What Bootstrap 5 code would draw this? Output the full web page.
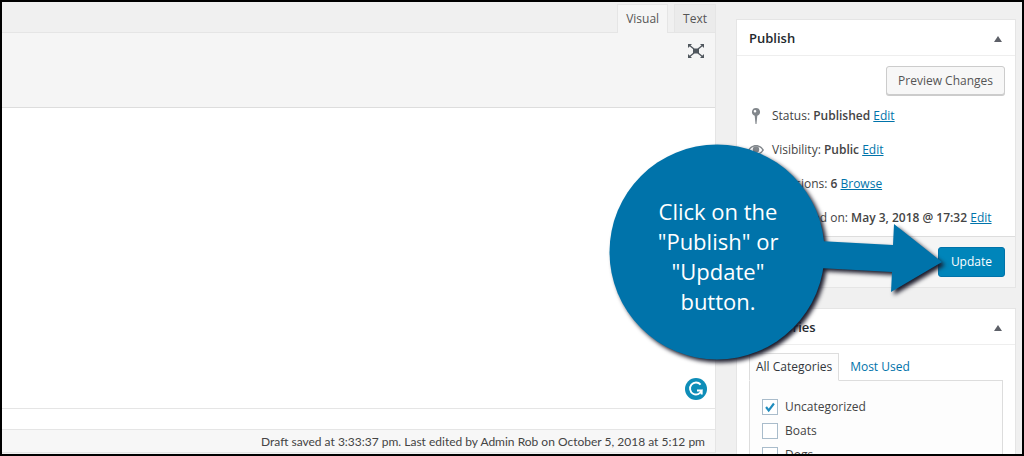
<!DOCTYPE html>
<html lang="en">
<head>
<meta charset="utf-8">
<meta name="viewport" content="width=device-width, initial-scale=1">
<title>Edit Post</title>
<link href="https://cdn.jsdelivr.net/npm/bootstrap@5.3.0/dist/css/bootstrap.min.css" rel="stylesheet">
<style>
  body { font-family: "Open Sans", "Noto Sans", sans-serif; font-size: 12px; line-height: 18px; color: #444; background: #f0f0f0; }
  a { color: #0073aa; }
  b { font-weight: 600; }
  .frame { border: 2px solid #000; padding-right: 6px; gap: 20px; }
  .editor-tabs { height: 30px; gap: 6px; padding-top: 2px; }
  .editor-tabs .nav-link { border: 1px solid #e5e5e5; border-bottom: 0; border-radius: 0; background: #ebebeb; color: #555; padding: 5px 8px; margin: 0; height: 28px; }
  .editor-tabs .nav-link.active { background: #f5f5f5; color: #555; height: 29px; z-index: 1; }
  .editor-box { border: 1px solid #e5e5e5; border-left: 0; background: #fff; margin-bottom: 1px; }
  .editor-bar { height: 75px; background: #f5f5f5; border-bottom: 1px solid #ddd; padding: 11px 10px; }
  .editor-text { resize: none; border-radius: 0; border: 0; font-size: 12px; }
  .editor-path { height: 21px; border-top: 1px solid #e5e5e5; }
  .editor-status { height: 23px; border-top: 1px solid #e5e5e5; background: #f7f7f7; padding: 3px 10px; font-family: Lato, "Open Sans", sans-serif; }
  .helper { right: 8px; bottom: 8px; width: 22px; height: 22px; }
  .side { width: 280px; padding-top: 17px; gap: 20px; }
  .postbox { background: #fff; border: 1px solid #e5e5e5; border-radius: 0; }
  .postbox-head { height: 36px; border-bottom: 1px solid #eee; padding: 2px 12px 0; }
  .postbox-head h2 { font-size: 13px; font-weight: 600; color: #23282d; }
  .wp-btn { font-size: 12px; line-height: 18px; border-radius: 3px; }
  .preview-row { padding: 10px 10px 4px; }
  .btn-preview { background: #f7f7f7; border: 1px solid #ccc; color: #555; box-shadow: 0 1px 0 #ccc; padding: 5px 11px 4px; }
  .btn-update { background: #0085ba; border: 1px solid #0073aa; color: #fff; padding: 5px 12px; }
  .meta-row { height: 34px; gap: 7px; padding: 0 10px; }
  .meta-row svg { width: 18px; height: 18px; flex: none; fill: #82878c; }
  .publish-foot { background: #f5f5f5; border-top: 1px solid #ddd; padding: 10px; margin-top: 1px; }
  .cat-tabs { margin-bottom: -1px; }
  .cat-tabs .nav-link { color: #0073aa; border: 1px solid transparent; border-radius: 0; padding: 3px 6px 4px; line-height: 19px; margin: 0; }
  .cat-tabs .nav-link.active { color: #32373c; background: #fdfdfd; border-color: #ddd #ddd #fdfdfd; }
  .cat-list { border: 1px solid #ddd; background: #fdfdfd; padding: 14px 12px; height: 200px; }
  .cat-list label { height: 24px; gap: 7px; }
  .cat-list input { width: 16px; height: 16px; margin: 0; border: 1px solid #a9bccb; border-radius: 0 !important; }
  .cat-list input:checked { background-color: #fff; border-color: #a9bccb; background-image: url("data:image/svg+xml,%3Csvg xmlns='http://www.w3.org/2000/svg' viewBox='0 0 16 16'%3E%3Cpath d='M3.5 8l3 4 6-8' fill='none' stroke='%231e8cbe' stroke-width='2.4'/%3E%3C/svg%3E"); }
  .callout { right: 79px; top: 130px; width: 350px; height: 240px; pointer-events: none; }
  .callout svg { filter: drop-shadow(3px 3px 2px #1a1a2a); }
  .callout-text { left: 16px; top: 16px; width: 218px; height: 216px; font-size: 22px; line-height: 30px; color: #fff; }
</style>
</head>
<body>
<div class="frame d-flex vh-100 overflow-hidden position-relative">
  <main class="flex-fill d-flex flex-column">
    <nav class="nav editor-tabs justify-content-end" aria-label="Editor mode">
      <button type="button" class="nav-link active">Visual</button>
      <button type="button" class="nav-link">Text</button>
    </nav>
    <div class="editor-box flex-fill d-flex flex-column">
      <div class="editor-bar d-flex justify-content-end align-items-start">
        <button type="button" class="btn p-0 border-0 d-flex" aria-label="Distraction-free writing">
          <svg width="18" height="14" viewBox="0 0 18 14" fill="#50575e"><path d="M6 4.500h6v5H6zM1 0h4L1 4zM13 0h4v4zM1 10l4 4H1zM17 10v4h-4z"/><path d="M2 1l5 4M16 1l-5 4M2 13l5-4M16 13l-5-4" stroke="#50575e" stroke-width="1.400"/></svg>
        </button>
      </div>
      <div class="flex-fill position-relative d-flex">
        <textarea class="form-control editor-text" aria-label="Post content"></textarea>
        <svg class="helper position-absolute" viewBox="0 0 22 22"><circle cx="11" cy="11" r="11" fill="#0e8db8"/><path d="M15.600 6.600A6 6 0 1 0 16.700 12.500H12M16.700 12v4.500" fill="none" stroke="#fff" stroke-width="1.900"/></svg>
      </div>
      <div class="editor-path"></div>
      <div class="editor-status text-end">Draft saved at 3:33:37 pm. Last edited by Admin Rob on October 5, 2018 at 5:12 pm</div>
    </div>
  </main>

  <aside class="side d-flex flex-column flex-shrink-0">
    <section class="postbox flex-shrink-0">
      <div class="postbox-head d-flex align-items-center justify-content-between">
        <h2 class="m-0">Publish</h2>
        <button type="button" class="btn p-0 border-0 d-flex" aria-label="Toggle Publish panel"><svg width="10" height="6" viewBox="0 0 10 6"><path d="M5 0l4 6H1z" fill="#5d6068"/></svg></button>
      </div>
      <div class="preview-row d-flex justify-content-end"><button type="button" class="btn wp-btn btn-preview">Preview Changes</button></div>
      <div class="meta-row d-flex align-items-center">
        <svg viewBox="0 0 18 18"><path d="M9 1a4 4 0 0 0-1.300 7.800L8.500 17h1l.8-8.200A4 4 0 0 0 9 1zM8 3a1.300 1.300 0 1 1 0 2.600A1.300 1.300 0 0 1 8 3z" fill-rule="evenodd"/></svg>
        <span>Status: <b>Published</b> <a href="#">Edit</a></span>
      </div>
      <div class="meta-row d-flex align-items-center">
        <svg viewBox="0 0 18 18"><path d="M9 4C5 4 2.500 6.500 1 9c1.500 2.500 4 5 8 5s6.500-2.500 8-5c-1.500-2.500-4-5-8-5zm0 1.500c3 0 5 1.500 6.200 3.500C14 11 12 12.500 9 12.500S4 11 2.800 9C4 7 6 5.500 9 5.500z" fill-rule="evenodd"/><circle cx="9" cy="8.500" r="3.200"/></svg>
        <span>Visibility: <b>Public</b> <a href="#">Edit</a></span>
      </div>
      <div class="meta-row d-flex align-items-center">
        <svg viewBox="0 0 18 18"><path d="M9 2a7 7 0 1 0 7 7h-2a5 5 0 1 1-5-5zM8 5h2v4h3v2H8z"/></svg>
        <span>Revisions: <b>6</b> <a href="#">Browse</a></span>
      </div>
      <div class="meta-row d-flex align-items-center">
        <svg viewBox="0 0 18 18"><path d="M2 3h14v13H2zm2 4v7h10V7z" fill-rule="evenodd"/></svg>
        <span class="text-nowrap">Published on: <b>May 3, 2018 @ 17:32</b> <a href="#">Edit</a></span>
      </div>
      <div class="publish-foot d-flex justify-content-end"><button type="button" class="btn wp-btn btn-update">Update</button></div>
    </section>

    <section class="postbox flex-shrink-0">
      <div class="postbox-head d-flex align-items-center justify-content-between">
        <h2 class="m-0">Categories</h2>
        <button type="button" class="btn p-0 border-0 d-flex" aria-label="Toggle Categories panel"><svg width="10" height="6" viewBox="0 0 10 6"><path d="M5 0l4 6H1z" fill="#5d6068"/></svg></button>
      </div>
      <div class="px-2 pt-2 ms-1 me-1">
        <nav class="nav cat-tabs gap-1 position-relative">
          <a class="nav-link active" href="#">All Categories</a>
          <a class="nav-link" href="#">Most Used</a>
        </nav>
        <div class="cat-list">
          <label class="d-flex align-items-center"><input class="form-check-input" type="checkbox" checked>Uncategorized</label>
          <label class="d-flex align-items-center"><input class="form-check-input" type="checkbox">Boats</label>
          <label class="d-flex align-items-center"><input class="form-check-input" type="checkbox">Dogs</label>
        </div>
      </div>
    </section>
  </aside>

  <div class="callout position-absolute">
    <svg class="d-block" width="350" height="240" viewBox="0 0 350 240">
      <circle cx="124" cy="120" r="107.500" fill="#0073aa"/>
      <path d="M226 109L300 113 301 92 349 130 298 160 299 140 226 136z" fill="#0073aa"/>
    </svg>
    <div class="callout-text position-absolute d-flex align-items-center justify-content-center text-center">Click on the<br>"Publish" or<br>"Update"<br>button.</div>
  </div>
</div>
<script src="https://cdn.jsdelivr.net/npm/bootstrap@5.3.0/dist/js/bootstrap.bundle.min.js"></script>
</body>
</html>
